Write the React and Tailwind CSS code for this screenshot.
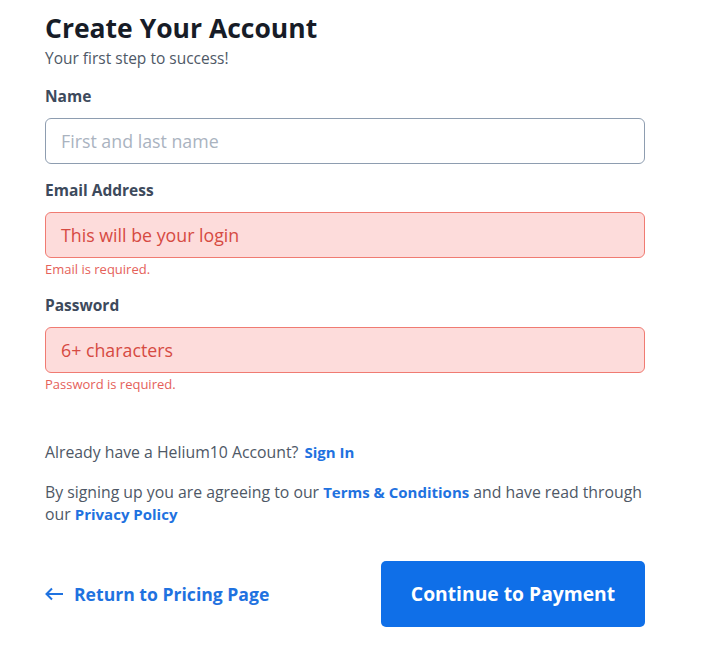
import React from 'react';

const Field = ({ label, placeholder, error, topGap }) => {
    return (
        <div className={topGap}>
            <label className="block text-[15.5px] font-bold text-[#3d4a5c] leading-[20px]">{label}</label>
            <div className={`mt-[12px] h-[46px] w-[600px] rounded-[6px] border flex items-center px-[15px] text-[17.8px]
                ${error ? 'bg-[#fddcdb] border-[#f07b72] text-[#d64a42]' : 'bg-white border-[#8e9db0] text-[#aab3bf]'}`}>
                {placeholder}
            </div>
            {error && <p className="mt-[4px] text-[13px] leading-[14px] text-[#e5615a]">{error}</p>}
        </div>
    );
};

const App = () => {
    return (
        <div className="bg-white w-[704px] h-[657px] pl-[45px] pt-[12px] font-['Open_Sans','Lato',sans-serif]">
            <h1 className="text-[26.5px] font-bold text-[#171c27] leading-[32px]">Create Your Account</h1>
            <p className="text-[15.5px] text-[#4e5866] leading-[18px] mt-[5px]">Your first step to success!</p>

            <Field label="Name" placeholder="First and last name" topGap="mt-[19px]" />
            <Field label="Email Address" placeholder="This will be your login" error="Email is required." topGap="mt-[16px]" />
            <Field label="Password" placeholder="6+ characters" error="Password is required." topGap="mt-[19px]" />

            <p className="mt-[50px] text-[15.8px] text-[#4e5866] leading-[22px]">
                Already have a Helium10 Account? <span className="ml-[2px] text-[15px] font-bold text-[#1f72e0]">Sign In</span>
            </p>
            <p className="mt-[18px] w-[600px] text-[15.8px] text-[#4e5866] leading-[22px]">
                By signing up you are agreeing to our <span className="text-[15px] font-bold text-[#1f72e0]">Terms &amp; Conditions</span> and have read through our <span className="text-[15px] font-bold text-[#1f72e0]">Privacy Policy</span>
            </p>

            <div className="mt-[36px] w-[600px] flex items-center justify-between">
                <a className="flex items-center gap-[10px] text-[17.6px] font-bold text-[#1f72e0]">
                    <svg width="19" height="14" viewBox="0 0 19 14" fill="none" stroke="#1f72e0" strokeWidth="2">
                        <path d="M18 7H2M7 1.5L1.5 7L7 12.5" />
                    </svg>
                    Return to Pricing Page
                </a>
                <button className="w-[264px] h-[66px] rounded-[5px] bg-[#0f6fe8] text-white text-[19.3px] font-bold">
                    Continue to Payment
                </button>
            </div>
        </div>
    );
};

export default App;
